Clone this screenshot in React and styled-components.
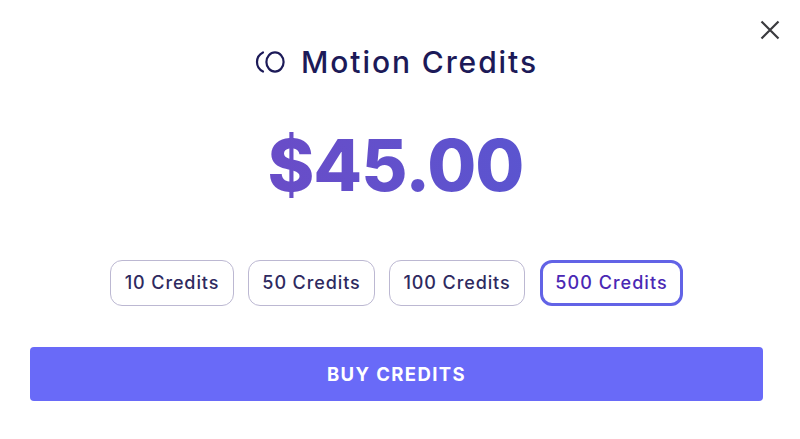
import React from 'react';
import styled, {createGlobalStyle} from 'styled-components';

const GlobalStyle = createGlobalStyle`
    html, body {
        margin: 0;
        padding: 0;
        background: #fff;
    }
`;

const Modal = styled.div`
    position: relative;
    box-sizing: border-box;
    width: 800px;
    height: 439px;
    padding: 42px 37px 0 30px;
    background: #fff;
    font-family: Inter, "Liberation Sans", sans-serif;
    display: flex;
    flex-direction: column;
    overflow: hidden;
`;

const CloseButton = styled.button`
    position: absolute;
    top: 20px;
    right: 20px;
    width: 20px;
    height: 20px;
    padding: 0;
    border: 0;
    background: none;
    display: block;
`;

const Title = styled.div`
    display: flex;
    align-items: center;
    justify-content: center;
    gap: 16px;
    height: 40px;
`;

const TitleText = styled.h1`
    margin: 0;
    font-size: 30px;
    font-weight: 550;
    letter-spacing: 1.9px;
    color: #1c1a58;
    line-height: 40px;
`;

const Price = styled.div`
    margin-top: 30px;
    padding-right: 2px;
    height: 106px;
    line-height: 106px;
    text-align: center;
    font-size: 71px;
    font-weight: 800;
    letter-spacing: -0.9px;
    background: linear-gradient(90deg, #6a4cc7 30%, #5a55d0 70%);
    -webkit-background-clip: text;
    background-clip: text;
    color: transparent;
`;

const Options = styled.div`
    display: flex;
    justify-content: center;
    margin-top: 42px;
`;

const Option = styled.button`
    box-sizing: border-box;
    width: ${props => props.width}px;
    height: 46px;
    margin-right: ${props => props.gap}px;
    padding: 0 0 2px;
    border-radius: 12px;
    background: #fff;
    border: ${props => props.selected ? '3px solid #6263e6' : '1.5px solid #bcb8d2'};
    color: ${props => props.selected ? '#4a28b4' : '#2e2a60'};
    font-family: inherit;
    font-size: 18px;
    font-weight: 450;
    letter-spacing: ${props => props.selected ? '1.05px' : '0.9px'};
`;

const BuyButton = styled.button`
    margin-top: 41px;
    height: 54px;
    width: 733px;
    padding: 0;
    border: 0;
    border-radius: 4px;
    background: #696af8;
    color: #fff;
    font-family: inherit;
    font-size: 18.5px;
    font-weight: 700;
    letter-spacing: 1.4px;
`;

const options = [
    {label: '10 Credits', width: 124, gap: 14},
    {label: '50 Credits', width: 127, gap: 14},
    {label: '100 Credits', width: 136, gap: 15},
    {label: '500 Credits', width: 143, gap: 0, selected: true},
];

export default function App() {
    return <Modal>
        <GlobalStyle/>
        <CloseButton aria-label="close">
            <svg width="20" height="20" viewBox="0 0 20 20">
                <path d="M1.5 1.5 L18.5 18.5 M18.5 1.5 L1.5 18.5" stroke="#3a3a3e" strokeWidth="2.2" fill="none"/>
            </svg>
        </CloseButton>
        <Title>
            <svg width="30" height="22" viewBox="0 0 30 22" fill="none" stroke="#1c1a58" strokeWidth="2.2">
                <ellipse cx="20" cy="11" rx="8.6" ry="9.6"/>
                <path d="M8 1.5 C 0 5.5 0 16.5 8 20.5" strokeLinecap="round"/>
            </svg>
            <TitleText>Motion Credits</TitleText>
        </Title>
        <Price>$45.00</Price>
        <Options>
            {options.map(option =>
                <Option key={option.label} width={option.width} gap={option.gap} selected={option.selected}>
                    {option.label}
                </Option>
            )}
        </Options>
        <BuyButton>BUY CREDITS</BuyButton>
    </Modal>;
}
